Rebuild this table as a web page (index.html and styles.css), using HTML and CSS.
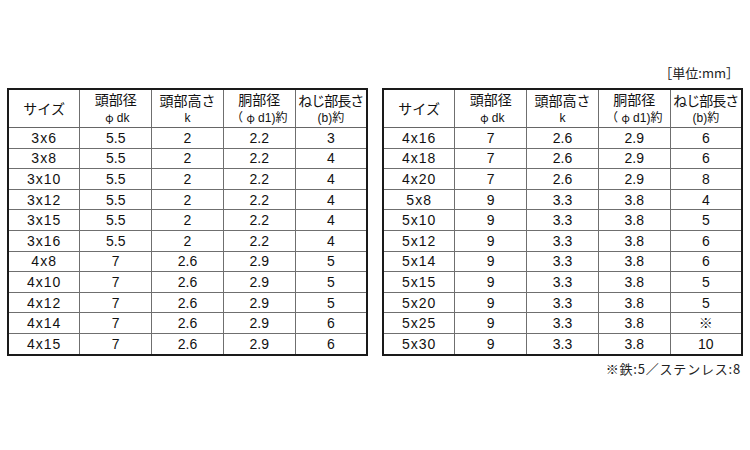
FILE: index.html
```html
<!DOCTYPE html>
<html lang="ja">
<head>
<meta charset="utf-8">
<link rel="stylesheet" href="styles.css">
</head>
<body>
<div class="page">
  <div class="unit">［単位:mm］</div>
  <div class="tables">
    <table class="spec">
      <tr class="head">
        <td>サイズ</td>
        <td><span class="l1">頭部径</span><span class="l2"><span class="phi">φ</span>dk</span></td>
        <td><span class="l1">頭部高さ</span><span class="l2">k</span></td>
        <td><span class="l1">胴部径</span><span class="l2">（<span class="phi">φ</span>d1)約</span></td>
        <td><span class="l1 narrow">ねじ部長さ</span><span class="l2">(b)約</span></td>
      </tr>
      <tr><td>3x6</td><td>5.5</td><td>2</td><td>2.2</td><td>3</td></tr>
      <tr><td>3x8</td><td>5.5</td><td>2</td><td>2.2</td><td>4</td></tr>
      <tr><td>3x10</td><td>5.5</td><td>2</td><td>2.2</td><td>4</td></tr>
      <tr><td>3x12</td><td>5.5</td><td>2</td><td>2.2</td><td>4</td></tr>
      <tr><td>3x15</td><td>5.5</td><td>2</td><td>2.2</td><td>4</td></tr>
      <tr><td>3x16</td><td>5.5</td><td>2</td><td>2.2</td><td>4</td></tr>
      <tr><td>4x8</td><td>7</td><td>2.6</td><td>2.9</td><td>5</td></tr>
      <tr><td>4x10</td><td>7</td><td>2.6</td><td>2.9</td><td>5</td></tr>
      <tr><td>4x12</td><td>7</td><td>2.6</td><td>2.9</td><td>5</td></tr>
      <tr><td>4x14</td><td>7</td><td>2.6</td><td>2.9</td><td>6</td></tr>
      <tr><td>4x15</td><td>7</td><td>2.6</td><td>2.9</td><td>6</td></tr>
    </table>
    <table class="spec">
      <tr class="head">
        <td>サイズ</td>
        <td><span class="l1">頭部径</span><span class="l2"><span class="phi">φ</span>dk</span></td>
        <td><span class="l1">頭部高さ</span><span class="l2">k</span></td>
        <td><span class="l1">胴部径</span><span class="l2">（<span class="phi">φ</span>d1)約</span></td>
        <td><span class="l1 narrow">ねじ部長さ</span><span class="l2">(b)約</span></td>
      </tr>
      <tr><td>4x16</td><td>7</td><td>2.6</td><td>2.9</td><td>6</td></tr>
      <tr><td>4x18</td><td>7</td><td>2.6</td><td>2.9</td><td>6</td></tr>
      <tr><td>4x20</td><td>7</td><td>2.6</td><td>2.9</td><td>8</td></tr>
      <tr><td>5x8</td><td>9</td><td>3.3</td><td>3.8</td><td>4</td></tr>
      <tr><td>5x10</td><td>9</td><td>3.3</td><td>3.8</td><td>5</td></tr>
      <tr><td>5x12</td><td>9</td><td>3.3</td><td>3.8</td><td>6</td></tr>
      <tr><td>5x14</td><td>9</td><td>3.3</td><td>3.8</td><td>6</td></tr>
      <tr><td>5x15</td><td>9</td><td>3.3</td><td>3.8</td><td>5</td></tr>
      <tr><td>5x20</td><td>9</td><td>3.3</td><td>3.8</td><td>5</td></tr>
      <tr><td>5x25</td><td>9</td><td>3.3</td><td>3.8</td><td>※</td></tr>
      <tr><td>5x30</td><td>9</td><td>3.3</td><td>3.8</td><td>10</td></tr>
    </table>
  </div>
  <div class="note">※鉄:5／ステンレス:8</div>
</div>
</body>
</html>
```

FILE: styles.css
```css
html, body {
  margin: 0;
  padding: 0;
  background: #ffffff;
}

body {
  font-family: "Liberation Sans", "Noto Sans CJK JP", sans-serif;
  color: #111111;
}

.page {
  width: 750px;
  height: 450px;
  padding: 64px 7px 0 7px;
  box-sizing: border-box;
}

.unit {
  text-align: right;
  font-family: "Noto Sans CJK JP", sans-serif;
  font-size: 13px;
  line-height: 18px;
  padding-right: 4px;
  margin-bottom: 6px;
  color: #222222;
}

.tables {
  display: flex;
  gap: 14px;
}

.spec {
  border-collapse: collapse;
  border: 2px solid #1a1a1a;
  width: 361px;
  table-layout: fixed;
}

.spec td {
  border: 1px solid #6f6f6f;
  text-align: center;
  vertical-align: middle;
  padding: 0;
  font-size: 14px;
  line-height: 16px;
  height: 19.6px;
}

.spec td:first-child {
  letter-spacing: 1px;
}

.spec .head td {
  height: 36px;
  font-family: "Noto Sans CJK JP", sans-serif;
  font-size: 14px;
  line-height: 19px;
  letter-spacing: 0;
  border-bottom: 1px solid #666666;
}

.spec .l1 {
  display: block;
  line-height: 19px;
}

.spec .l2 {
  display: block;
  line-height: 17px;
  font-family: "Liberation Sans", "Noto Sans CJK JP", sans-serif;
  font-size: 12px;
}

.spec .narrow {
  letter-spacing: -1px;
}

.spec .phi {
  font-family: "Noto Sans CJK JP", sans-serif;
  font-size: 11px;
  line-height: 17px;
  display: inline-block;
  width: 15px;
  text-align: center;
}

.note {
  text-align: right;
  font-family: "Noto Sans CJK JP", sans-serif;
  font-size: 13px;
  letter-spacing: 0.8px;
  line-height: 18px;
  padding-right: 2px;
  margin-top: 4px;
  color: #222222;
}
```
